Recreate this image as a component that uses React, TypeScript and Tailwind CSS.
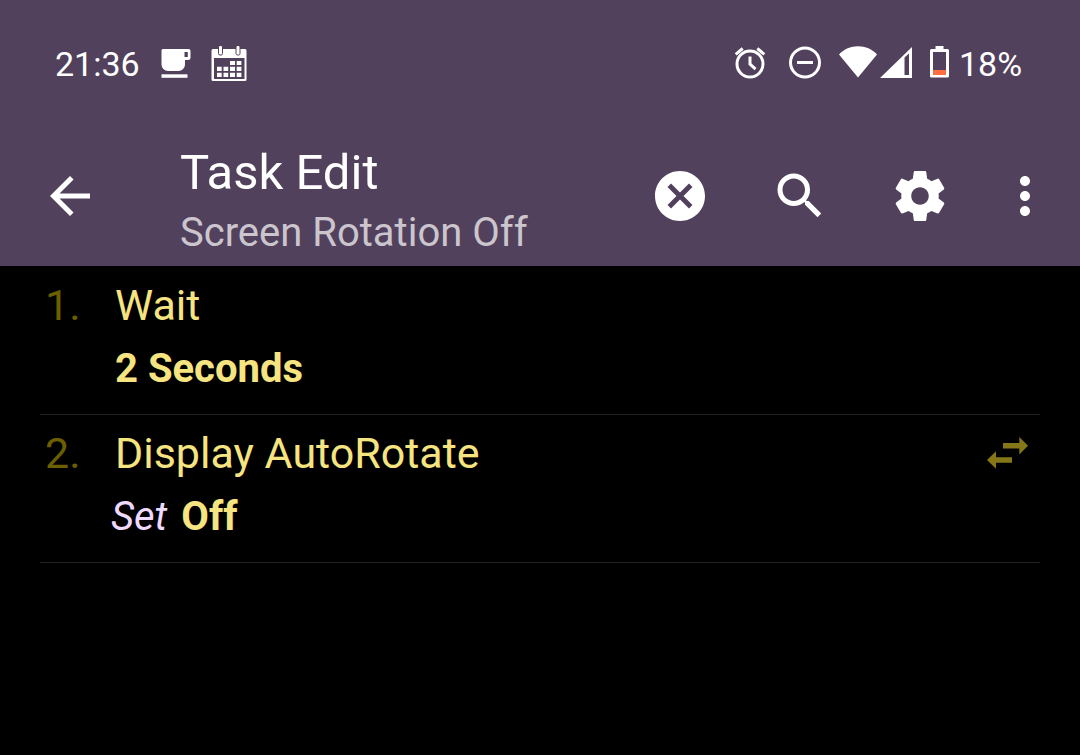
import type { ReactNode } from "react";
import { MdArrowBack, MdCancel, MdMoreVert, MdSearch } from "react-icons/md";

function StatusBar() {
  return (
    <div className="flex h-[126px] items-center justify-between px-[55px] text-[34px] leading-10">
      <div className="flex items-center">
        <span className="w-[106px] whitespace-nowrap pt-0.5">21:36</span>
        {/* Coffee cup */}
        <svg className="h-[30px] w-[30px]" viewBox="0 0 30 30" fill="currentColor">
          <path fillRule="evenodd" d="M2 1h25.5a2 2 0 0 1 2 2v6.5a2.5 2.5 0 0 1-2.5 2.5h-3v4.5a6.5 6.5 0 0 1-6.5 6.5H7A6.5 6.5 0 0 1 .5 16.5v-14A1.5 1.5 0 0 1 2 1zM23.5 4v5h3.3V4z" />
          <path d="M.5 26.3h26v3.5H.5z" />
        </svg>
        {/* Calendar */}
        <svg className="ml-5 mt-0.5 h-[36px] w-[36px]" viewBox="0 0 36 36" fill="currentColor">
          <path fillRule="evenodd" d="M2 3h32a1.5 1.5 0 0 1 1.5 1.5v29A1.5 1.5 0 0 1 34 35H2a1.5 1.5 0 0 1-1.5-1.5v-29A1.5 1.5 0 0 1 2 3zM3 12v21h30.5V12z" />
          <path d="M19 15h5v4h-5zM25.700 15h4.7v4h-4.7zM6 20.700h4.7V25H6zM12.500 20.700h4.7V25h-4.7zM19 20.700h5V25h-5zM25.700 20.700h4.7V25h-4.7zM6 26.700h4.7V31H6zM12.500 26.700h4.7V31h-4.7zM19 26.700h5V31h-5zM25.700 26.700h4.7V31h-4.7z" />
          <g stroke="#52415d" strokeWidth="1">
            <rect x="7.5" y="-.5" width="4" height="9.5" rx="1.5" />
            <rect x="25" y="-.5" width="4" height="9.5" rx="1.5" />
          </g>
        </svg>
      </div>
      <div className="flex items-center">
        {/* Alarm clock */}
        <svg className="h-[32px] w-[32px]" viewBox="0 0 32 32" fill="none" stroke="currentColor" strokeWidth="3">
          <circle cx="16" cy="17" r="13" />
          <path d="M16 9.5V17l5.500 5.200M1.700 7.300l7-5.800M30.300 7.300l-7-5.800" />
        </svg>
        {/* Do not disturb */}
        <svg className="ml-[22px] h-[34px] w-[34px]" viewBox="0 0 34 34" fill="none" stroke="currentColor" strokeWidth="3">
          <circle cx="17" cy="16.5" r="14.5" />
          <path d="M9 16.5h16" />
        </svg>
        {/* Wifi */}
        <svg className="ml-[17px] h-[32px] w-[38px] overflow-visible" viewBox="0 0 38 32" fill="currentColor">
          <path d="M0 7.500C5 2 11.500-.8 19-.8S33 2 38 7.500l-19 23z" />
        </svg>
        {/* Signal */}
        <svg className="ml-[3px] h-[32px] w-[32px]" viewBox="0 0 32 32" fill="currentColor">
          <path fillRule="evenodd" d="M32 0v31H0zM24.500 10.500V28H29V6.500z" />
        </svg>
        {/* Battery */}
        <svg className="ml-[18px] h-[32px] w-[19px] overflow-visible" viewBox="0 0 19 32">
          <path fill="currentColor" fillRule="evenodd" d="M5.500-1h8v3h4A1.500 1.500 0 0 1 19 3.500v25.500a1.500 1.500 0 0 1-1.500 1.500h-16A1.500 1.500 0 0 1 0 29V3.500A1.500 1.500 0 0 1 1.500 2h4zM3 5v23h13V5z" />
          <path fill="#ff6e40" d="M3 23h13v5H3z" />
        </svg>
        <span className="ml-2.5 w-[66px] whitespace-nowrap pt-0.5">18%</span>
      </div>
    </div>
  );
}

function ToolButton({ label, className = "w-[120px]", children }: { label: string; className?: string; children: ReactNode }) {
  return (
    <button type="button" aria-label={label} className={`flex h-[120px] shrink-0 items-center justify-center ${className}`}>
      {children}
    </button>
  );
}

function Toolbar() {
  return (
    <div className="flex h-[140px] items-center pr-2.5">
      <ToolButton label="Back" className="w-[140px]">
        <MdArrowBack className="size-[60px]" />
      </ToolButton>
      <div className="ml-10 min-w-0 flex-1 whitespace-nowrap pt-3.5">
        <h1 className="text-[49px] leading-[60px]">Task Edit</h1>
        <p className="text-[40px] leading-[60px] text-[#cbc6ce]">Screen Rotation Off</p>
      </div>
      <ToolButton label="Cancel">
        <MdCancel className="size-[60px]" />
      </ToolButton>
      <ToolButton label="Search">
        <MdSearch className="size-[60px]" />
      </ToolButton>
      <ToolButton label="Settings">
        <svg className="size-[60px]" viewBox="0 0 24 24" fill="currentColor">
          <path d="M19.43 12.98c.04-.32.07-.64.07-.98s-.03-.66-.07-.98l2.110-1.650c.19-.15.24-.42.12-.64l-2-3.460c-.12-.22-.39-.3-.61-.22l-2.490 1c-.52-.4-1.080-.73-1.690-.98l-.38-2.650C14.460 2.180 14.250 2 14 2h-4c-.25 0-.46.18-.49.42l-.38 2.650c-.61.25-1.170.59-1.690.98l-2.490-1c-.23-.09-.49 0-.61.22l-2 3.460c-.13.22-.07.49.12.64l2.110 1.650c-.04.32-.07.65-.07.98s.03.66.07.98l-2.110 1.650c-.19.15-.24.42-.12.64l2 3.460c.12.22.39.3.61.22l2.490-1c.52.4 1.080.73 1.690.98l.38 2.650c.03.24.24.42.49.42h4c.25 0 .46-.18.49-.42l.38-2.650c.61-.25 1.170-.59 1.690-.98l2.490 1c.23.09.49 0 .61-.22l2-3.460c.12-.22.07-.49-.12-.64l-2.110-1.650zM12 15.500c-1.930 0-3.500-1.570-3.500-3.500s1.570-3.500 3.500-3.500 3.500 1.570 3.500 3.500-1.570 3.500-3.500 3.500z" />
        </svg>
      </ToolButton>
      <ToolButton label="More options" className="w-[90px]">
        <MdMoreVert className="size-[60px]" />
      </ToolButton>
    </div>
  );
}

function ActionRow({ number, title, icon, children }: { number: number; title: string; icon?: ReactNode; children: ReactNode }) {
  return (
    <li className="flex h-[148px] border-b border-[#222222] pl-[5px] pr-3 pt-1.5 leading-[64px]">
      <span className="w-[70px] shrink-0 text-[43px] text-[#6b5f00]">{number}.</span>
      <div className="min-w-0 flex-1 whitespace-nowrap">
        <h2 className="text-[43px]">{title}</h2>
        <p className="text-[40px]">{children}</p>
      </div>
      {icon}
    </li>
  );
}

export default function App() {
  return (
    <div className="min-h-screen bg-black font-['Roboto',sans-serif] text-white">
      <header className="bg-[#52415d]">
        <StatusBar />
        <Toolbar />
      </header>
      <main>
        <ol className="px-10 pt-px text-[#f5e480]">
          <ActionRow number={1} title="Wait">
            <b>2 Seconds</b>
          </ActionRow>
          <ActionRow
            number={2}
            title="Display AutoRotate"
            icon={
              <svg className="mt-4 h-[32px] w-[41px] shrink-0" viewBox="0 0 41 32" fill="#857718">
                <path d="M16 6h16.300V0L41 8.800l-8.700 8.800v-6H16zM25 20.300H9v-6L0 23l9 8.800v-6h16z" />
              </svg>
            }
          >
            <i className="-ml-1 mr-3.5 text-[#eed9ff]">Set</i>
            <b>Off</b>
          </ActionRow>
        </ol>
      </main>
    </div>
  );
}
